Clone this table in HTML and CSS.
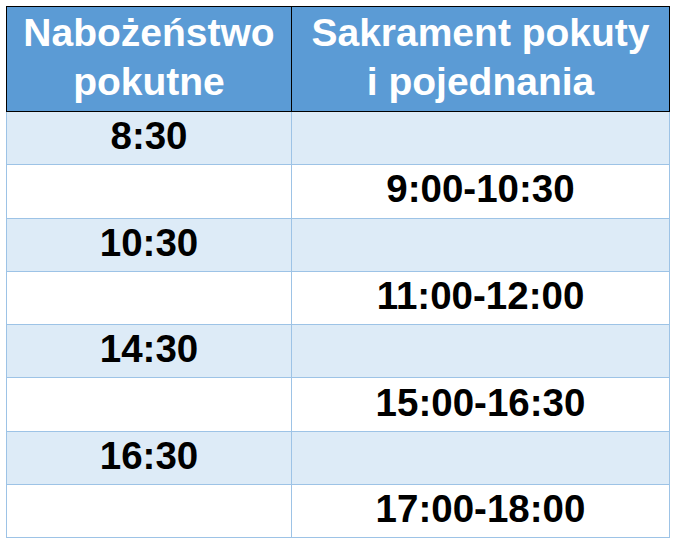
FILE: index.html
```html
<!DOCTYPE html>
<html lang="pl">
<head>
<meta charset="utf-8">
<title>Harmonogram</title>
<link rel="stylesheet" href="styles.css">
</head>
<body>
<table class="schedule">
  <thead>
    <tr class="head-row">
      <th class="col-a">Nabożeństwo<br>pokutne</th>
      <th class="col-b">Sakrament pokuty<br>i pojednania</th>
    </tr>
  </thead>
  <tbody>
    <tr class="row alt"><td>8:30</td><td></td></tr>
    <tr class="row"><td></td><td>9:00-10:30</td></tr>
    <tr class="row alt"><td>10:30</td><td></td></tr>
    <tr class="row"><td></td><td>11:00-12:00</td></tr>
    <tr class="row alt"><td>14:30</td><td></td></tr>
    <tr class="row"><td></td><td>15:00-16:30</td></tr>
    <tr class="row alt"><td>16:30</td><td></td></tr>
    <tr class="row"><td></td><td>17:00-18:00</td></tr>
  </tbody>
</table>
</body>
</html>
```
FILE: styles.css
```css
html, body {
  margin: 0;
  padding: 0;
  background: #ffffff;
}
body {
  padding: 6px 0 0 6px;
  font-family: "Liberation Sans", Arial, sans-serif;
}
.schedule {
  border-collapse: collapse;
  width: 661px;
  table-layout: fixed;
}
.col-a { width: 284px; }
.col-b { width: 377px; }
.head-row th {
  background: #5b9bd5;
  color: #ffffff;
  font-weight: bold;
  font-size: 39px;
  line-height: 49px;
  height: 100px;
  padding: 0 0 4px 0;
  border: 1px solid #000000;
  text-align: center;
  vertical-align: middle;
}
.row td {
  height: 48.3px;
  padding: 0 0 4px 0;
  font-size: 38.5px;
  line-height: 44px;
  font-weight: bold;
  color: #000000;
  text-align: center;
  vertical-align: middle;
  border: 1px solid #9dc3e6;
  background: #ffffff;
}
.row.alt td {
  background: #ddebf7;
}
```
